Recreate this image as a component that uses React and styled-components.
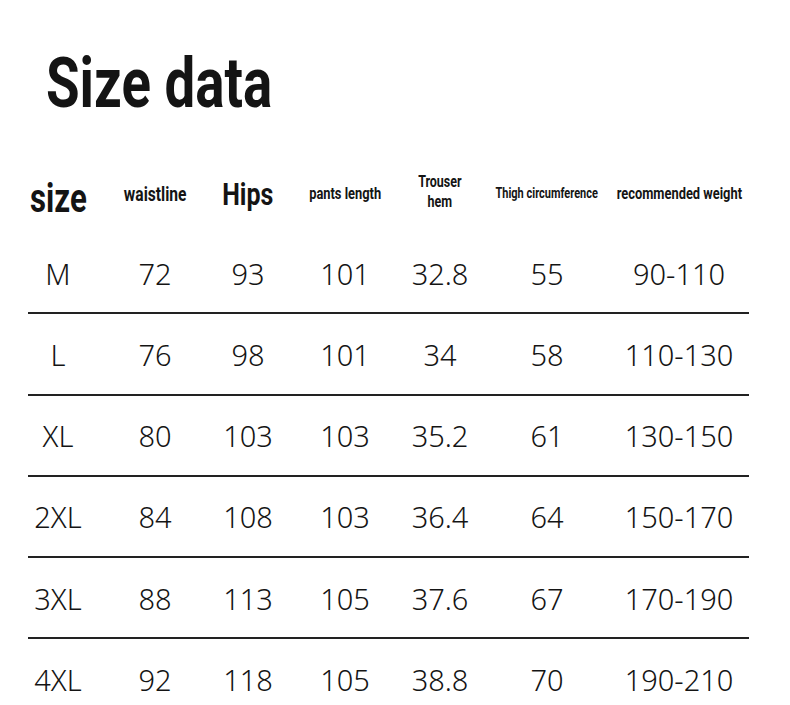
import React from "react";
import styled, { createGlobalStyle } from "styled-components";

const columns = [
  { label: "size", kind: "big", size: 40 },
  { label: "waistline", size: 20 },
  { label: "Hips", kind: "mid", size: 32 },
  { label: "pants length", size: 16.5 },
  { label: ["Trouser", "hem"], size: 16 },
  { label: "Thigh circumference", size: 14.1 },
  { label: "recommended weight", size: 16.5 },
];

const rows = [
  ["M", "72", "93", "101", "32.8", "55", "90-110"],
  ["L", "76", "98", "101", "34", "58", "110-130"],
  ["XL", "80", "103", "103", "35.2", "61", "130-150"],
  ["2XL", "84", "108", "103", "36.4", "64", "150-170"],
  ["3XL", "88", "113", "105", "37.6", "67", "170-190"],
  ["4XL", "92", "118", "105", "38.8", "70", "190-210"],
];

const App = () => (
  <Page>
    <GlobalStyle />
    <Title>
      <Squeeze $origin="left">Size data</Squeeze>
    </Title>
    <Table>
      <HeaderRow>
        {columns.map(({ label, kind, size }, i) => (
          <HeadCell key={i} $size={size} $kind={kind}>
            {Array.isArray(label) ? (
              <Stack>
                {label.map((line) => (
                  <Squeeze key={line}>{line}</Squeeze>
                ))}
              </Stack>
            ) : (
              <Squeeze>{label}</Squeeze>
            )}
          </HeadCell>
        ))}
      </HeaderRow>
      {rows.map((row, index) => (
        <Row key={row[0]} $divider={index < rows.length - 1}>
          {row.map((value, i) => (
            <Cell key={i}>{value}</Cell>
          ))}
        </Row>
      ))}
    </Table>
  </Page>
);

export default App;

const GlobalStyle = createGlobalStyle`
  html, body {
    margin: 0;
    padding: 0;
    background: #ffffff;
  }
`;

const Page = styled.div`
  width: 790px;
  height: 705px;
  overflow: hidden;
  padding-top: 48px;
  box-sizing: border-box;
  color: #141414;
`;

/* the reference uses a condensed face; Roboto squeezed horizontally stands in */
const Squeeze = styled.span`
  display: inline-block;
  transform: scaleX(0.78);
  transform-origin: ${({ $origin }) => $origin || "center"};
`;

const Title = styled.h1`
  margin: 0 0 0 46px;
  font-family: "Roboto", sans-serif;
  font-weight: 700;
  font-size: 70px;
  line-height: 70px;
  height: 70px;
  white-space: nowrap;
`;

const Table = styled.div`
  margin: 36px 0 0 28px;
  width: 721px;
  display: flex;
  flex-direction: column;
`;

const grid = `
  display: grid;
  grid-template-columns: 60px 134px 52px 142px 48px 166px 98px;
`;

const HeaderRow = styled.div`
  ${grid}
  height: 79px;
  align-items: center;
`;

const HeadCell = styled.div`
  display: flex;
  justify-content: center;
  white-space: nowrap;
  font-family: "Roboto", sans-serif;
  font-weight: 700;
  font-size: ${({ $size }) => $size}px;
  line-height: 1.2;
  padding-top: ${({ $kind }) =>
    $kind === "big" ? "10px" : $kind === "mid" ? "2px" : "0"};
`;

const Stack = styled.div`
  display: flex;
  flex-direction: column;
  align-items: center;
  line-height: 20px;
  margin-top: -4px;
`;

const Row = styled.div`
  ${grid}
  box-sizing: border-box;
  height: 81.25px;
  align-items: center;
  border-bottom: 2px solid
    ${({ $divider }) => ($divider ? "#222" : "transparent")};
`;

const Cell = styled.div`
  display: flex;
  justify-content: center;
  white-space: nowrap;
  font-family: "Noto Sans", "Open Sans", sans-serif;
  font-weight: 300;
  font-size: 29px;
  padding-top: 1px;
`;
